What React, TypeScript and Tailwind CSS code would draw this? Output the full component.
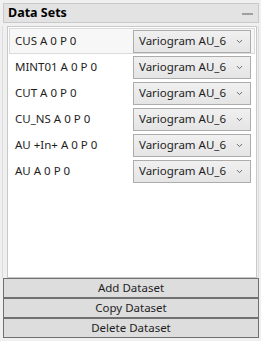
import { ChevronDown } from "lucide-react";

const rows = [
  "CUS A 0 P 0",
  "MINT01 A 0 P 0",
  "CUT A 0 P 0",
  "CU_NS A 0 P 0",
  "AU +In+ A 0 P 0",
  "AU A 0 P 0",
];

function Combo() {
  return (
    <div className="flex h-[23px] w-[118px] items-center justify-between border border-[#acacac] bg-gradient-to-b from-[#f0f0f0] to-[#e5e5e5] pl-[5px] pr-[6px]">
      <span className="text-[#1e1e1e]">Variogram AU_6</span>
      <ChevronDown className="h-[9px] w-[9px] text-[#606060]" strokeWidth={2.5} />
    </div>
  );
}

export default function App() {
  return (
    <div className="flex h-[341px] w-[261px] flex-col bg-[#f0f0f0] px-[2px] pt-[3px] pb-[3px] font-['Segoe_UI','Noto_Sans',sans-serif] text-[11.5px] text-[#1e1e1e]">
      {/* Header */}
      <div className="ml-px flex h-[20px] items-center justify-between border border-[#c9c9c9] bg-[#e3e3e3] pl-[4px] pr-[5px]">
        <span className="text-[12.5px] font-bold text-black">Data Sets</span>
        <span className="mt-px h-[2px] w-[11px] bg-[#a0a0a0]" />
      </div>

      {/* List area */}
      <div className="mt-[3px] flex flex-1 border-x border-[#dcdcdc] pl-[4px] pr-[1px]">
        <div className="flex flex-1 flex-col border border-[#c8c8c8] bg-white p-px">
          {rows.map((name, i) => (
            <div
              key={name}
              className={
                i === 0
                  ? "flex h-[26px] items-center justify-between border border-[#dadada] bg-[#f7f7f7] pl-[5px] pr-[3px]"
                  : "flex h-[26px] items-center justify-between border border-transparent pl-[5px] pr-[3px]"
              }
            >
              <span>{name}</span>
              <Combo />
            </div>
          ))}
        </div>
      </div>

      {/* Buttons */}
      <div className="ml-px flex flex-col">
        {["Add Dataset", "Copy Dataset", "Delete Dataset"].map((label) => (
          <button
            key={label}
            className="h-[20px] border border-[#707070] bg-[#dddddd] leading-none text-[#1e1e1e]"
          >
            {label}
          </button>
        ))}
      </div>
    </div>
  );
}
